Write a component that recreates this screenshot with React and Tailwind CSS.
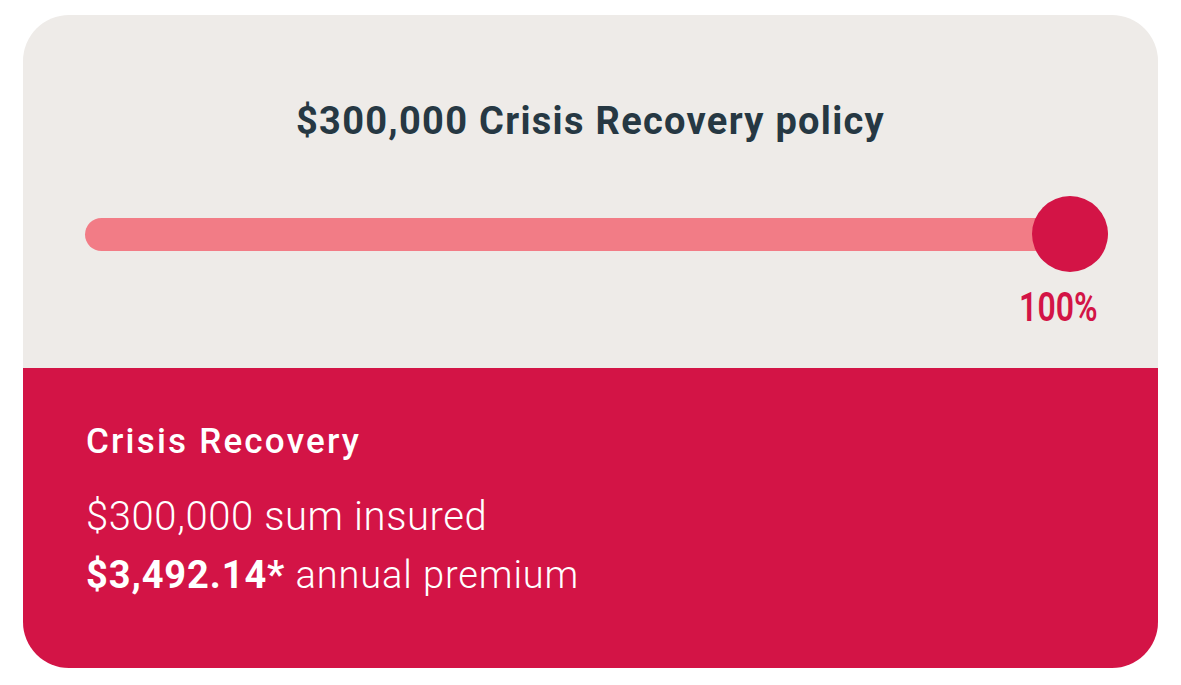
import React from 'react';

const App = () => {
  const percent = 100;

  return (
    <div className="w-[1181px] h-[685px] bg-white pt-[15px] pl-[23px] font-['Roboto','Liberation_Sans',sans-serif]">
      <div className="w-[1135px] h-[653px] rounded-[46px] overflow-hidden flex flex-col">
        {/* Slider section */}
        <div className="h-[353px] bg-[#eeebe8] flex flex-col pl-[62px] pr-[50px] pt-[84px]">
          <h2 className="text-center text-[38px] leading-[44px] font-bold text-[#263843] tracking-[1.3px] pr-[12px]">
            $300,000 Crisis Recovery policy
          </h2>
          <div className="relative mt-[53px] h-[76px] flex items-center">
            <div className="w-full h-[33px] rounded-full bg-[#f27c86]" />
            <div
              className="absolute top-0 w-[76px] h-[76px] rounded-full bg-[#d31446]"
              style={{ left: `calc(${percent}% - 76px)` }}
            />
          </div>
          <div className="flex justify-end pr-[10px] mt-[11px]">
            <span className="text-[41px] leading-[48px] font-semibold text-[#d31446] scale-x-[0.78] origin-right">
              {percent}%
            </span>
          </div>
        </div>

        {/* Summary section */}
        <div className="flex-1 bg-[#d31446] text-white px-[63px] pt-[52px]">
          <h3 className="text-[35px] leading-[44px] font-medium tracking-[2.2px]">Crisis Recovery</h3>
          <p className="mt-[29px] text-[40px] leading-[48px] font-light tracking-[0.6px]">$300,000 sum insured</p>
          <p className="mt-[10px] text-[38px] leading-[48px] font-light tracking-[0.9px]">
            <span className="font-bold">$3,492.14*</span> annual premium
          </p>
        </div>
      </div>
    </div>
  );
};

export default App;
